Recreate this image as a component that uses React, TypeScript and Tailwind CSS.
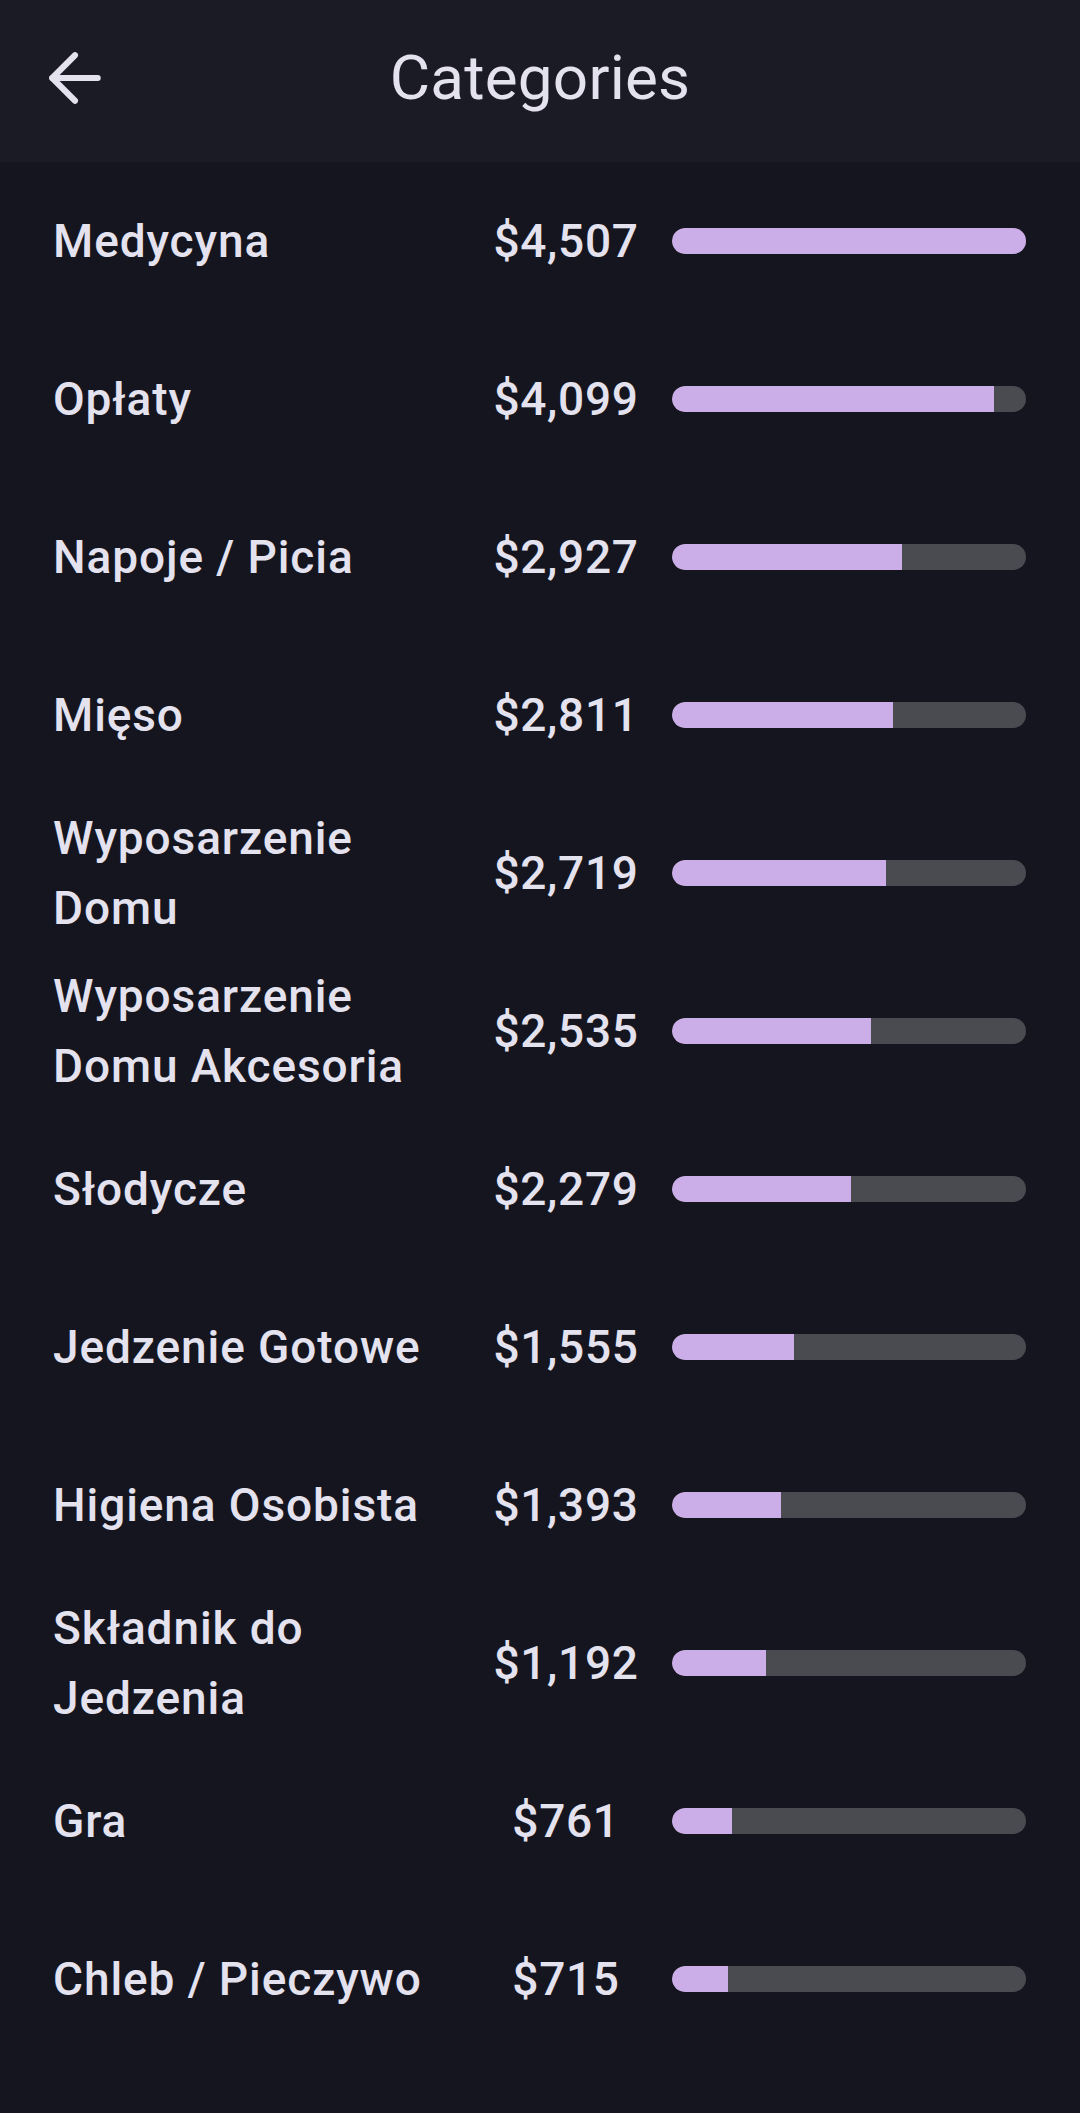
import React from 'react';
import { ArrowLeft } from 'lucide-react';

interface Category {
  name: string;
  amount: number;
}

const categories: Category[] = [
  { name: 'Medycyna', amount: 4507 },
  { name: 'Opłaty', amount: 4099 },
  { name: 'Napoje / Picia', amount: 2927 },
  { name: 'Mięso', amount: 2811 },
  { name: 'Wyposarzenie Domu', amount: 2719 },
  { name: 'Wyposarzenie Domu Akcesoria', amount: 2535 },
  { name: 'Słodycze', amount: 2279 },
  { name: 'Jedzenie Gotowe', amount: 1555 },
  { name: 'Higiena Osobista', amount: 1393 },
  { name: 'Składnik do Jedzenia', amount: 1192 },
  { name: 'Gra', amount: 761 },
  { name: 'Chleb / Pieczywo', amount: 715 },
];

const max = Math.max(...categories.map((c) => c.amount));

const App: React.FC = () => {
  return (
    <div
      className="min-h-[2113px] w-[1080px] bg-[#15151f] text-[#e3e2ee]"
      style={{ fontFamily: 'Roboto, "Noto Sans", sans-serif' }}
    >
      <header className="relative flex h-[162px] items-center justify-center bg-[#1b1b26] pb-[6px]">
        <button className="absolute left-[32px] top-[35px] p-1 text-[#e3e2ee]">
          <ArrowLeft size={78} strokeWidth={1.85} />
        </button>
        <h1 className="text-[62px] font-normal leading-none tracking-[0.2px]">Categories</h1>
      </header>

      <ul className="pl-[53px] pr-[54px]">
        {categories.map((c) => (
          <li key={c.name} className="flex h-[158px] items-center">
            <span className="flex-1 pr-4 text-[46px] font-medium leading-[70px] tracking-[0.9px]">
              {c.name}
            </span>
            <span className="w-[150px] text-center text-[46px] font-medium tracking-[0.7px]">
              ${c.amount.toLocaleString('en-US')}
            </span>
            <div className="ml-[31px] h-[26px] w-[354px] overflow-hidden rounded-full bg-[#4a4a51]">
              <div
                className="h-full rounded-l-full bg-[#cbaee8]"
                style={{ width: `${(c.amount / max) * 100}%` }}
              />
            </div>
          </li>
        ))}
      </ul>
    </div>
  );
};

export default App;
